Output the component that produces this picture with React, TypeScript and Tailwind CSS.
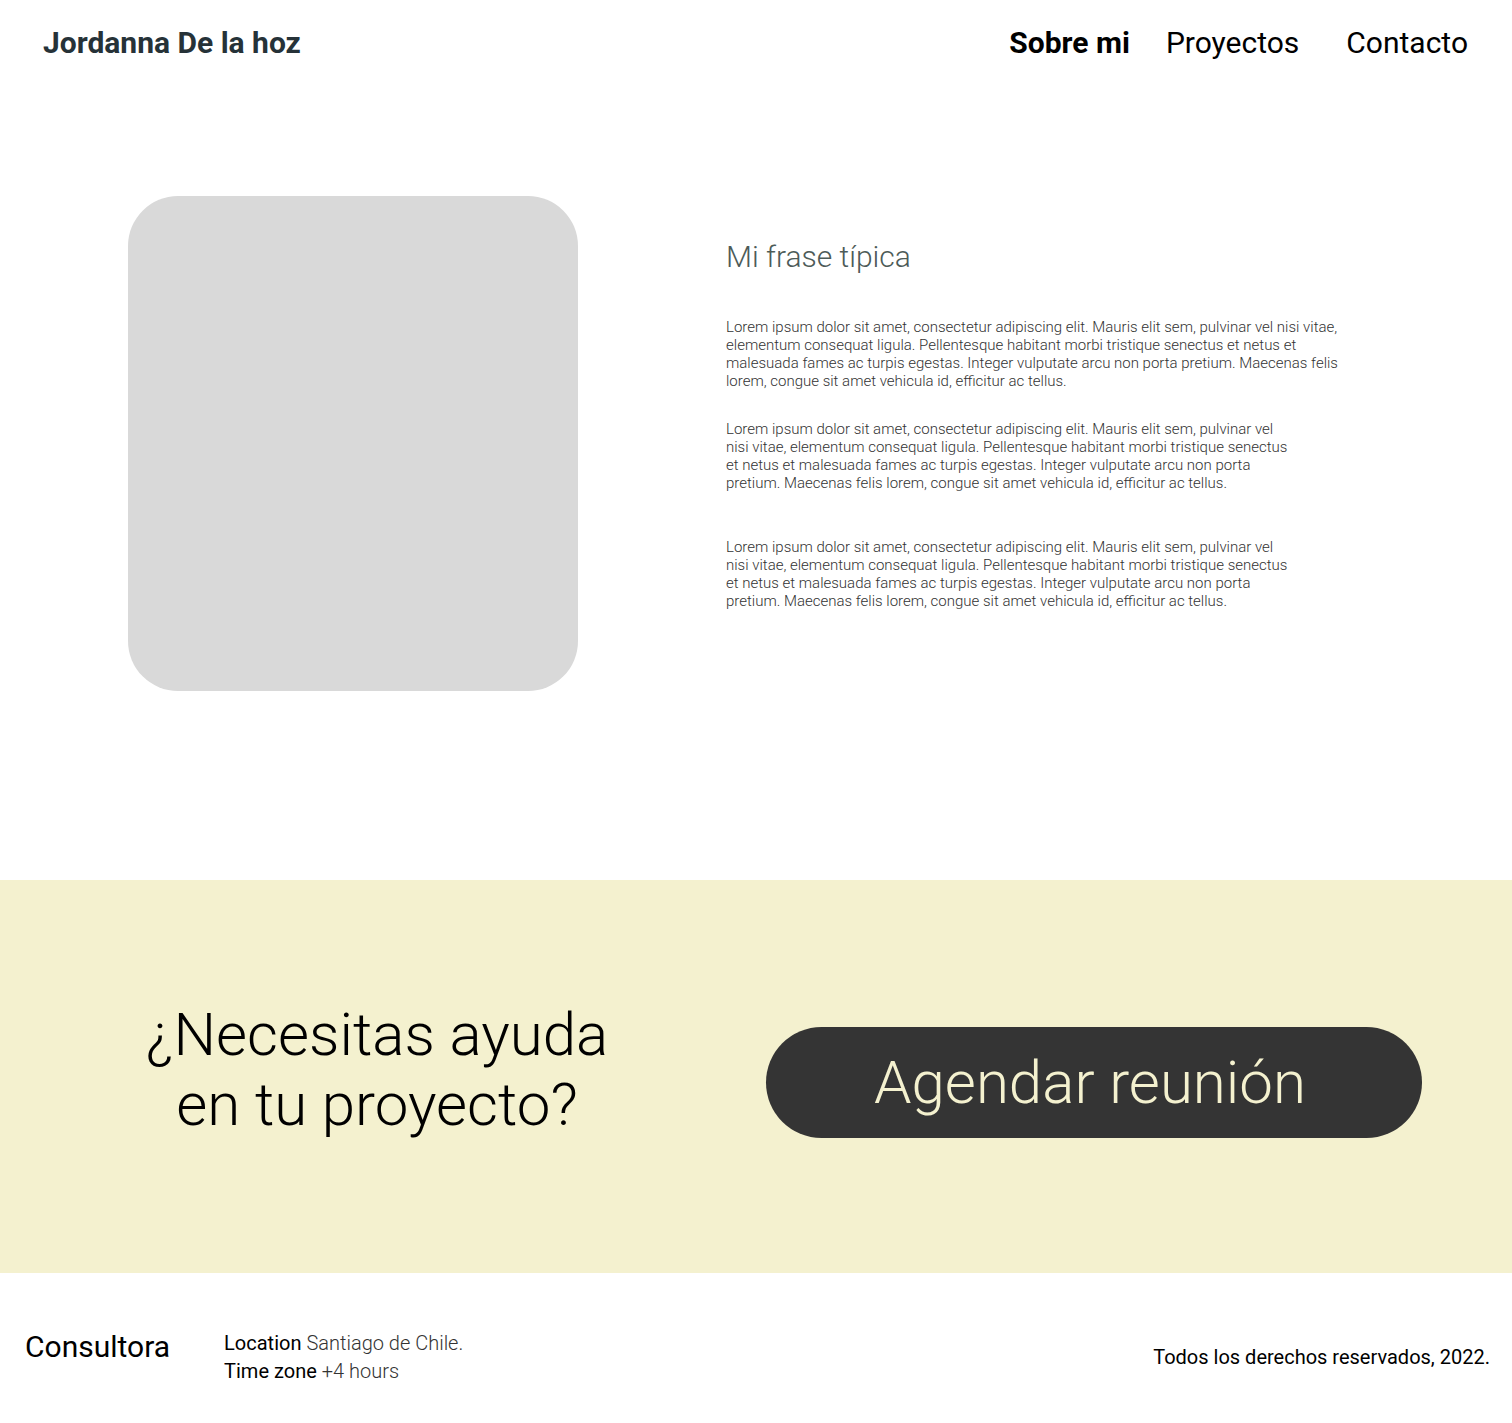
import React from "react";

const P =
  "Lorem ipsum dolor sit amet, consectetur adipiscing elit. Mauris elit sem, pulvinar vel nisi vitae, elementum consequat ligula. Pellentesque habitant morbi tristique senectus et netus et malesuada fames ac turpis egestas. Integer vulputate arcu non porta pretium. Maecenas felis lorem, congue sit amet vehicula id, efficitur ac tellus.";

export default function App() {
  return (
    <div className="w-[1512px] min-h-[1423px] bg-white font-['Roboto',_sans-serif] text-black">
      {/* Header */}
      <header className="h-[88px] flex items-center justify-between pl-[43px] pr-[44px] pb-[3px]">
        <div className="text-[30px] font-bold text-[#263238]">Jordanna De la hoz</div>
        <nav className="flex items-center text-[30px]">
          <a className="font-bold">Sobre mi</a>
          <a className="ml-[36px]">Proyectos</a>
          <a className="ml-[47px]">Contacto</a>
        </nav>
      </header>

      {/* About */}
      <section className="h-[792px] flex pl-[128px] pt-[108px]">
        <div className="w-[450px] h-[495px] rounded-[50px] bg-[#d9d9d9] shrink-0" />
        <div className="ml-[148px] pt-[43px] flex flex-col">
          <h2 className="text-[30px] leading-[36px] font-light text-[#4d5b58]">Mi frase típica</h2>
          <p className="mt-[43px] w-[625px] text-[15px] leading-[18px] font-light text-[#333333]">{P}</p>
          <p className="mt-[30px] w-[568px] text-[15px] leading-[18px] font-light text-[#333333]">{P}</p>
          <p className="mt-[46px] w-[568px] text-[15px] leading-[18px] font-light text-[#333333]">{P}</p>
        </div>
      </section>

      {/* CTA */}
      <section className="h-[393px] bg-[#f4f1cf] flex items-center">
        <h2 className="w-[754px] text-center text-[60px] leading-[70px] font-light text-black mt-[-14px]">
          ¿Necesitas ayuda
          <br />
          en tu proyecto?
        </h2>
        <button className="ml-[12px] mt-[12px] w-[656px] h-[111px] rounded-full bg-[#343434] text-[#f4f1cf] text-[60px] font-light flex items-center justify-center pr-[8px]">
          Agendar reunión
        </button>
      </section>

      {/* Footer */}
      <footer className="h-[150px] flex items-center justify-between pl-[25px] pr-[22px] pt-[18px]">
        <div className="flex items-center">
          <div className="text-[30px] leading-[36px] mt-[-20px]">Consultora</div>
          <div className="ml-[54px] text-[20px] leading-[28px]">
            <div>
              <span className="font-normal">Location</span>{" "}
              <span className="font-light text-[#333333]">Santiago de Chile.</span>
            </div>
            <div>
              <span className="font-normal">Time zone</span>{" "}
              <span className="font-light text-[#333333]">+4 hours</span>
            </div>
          </div>
        </div>
        <div className="text-[20px] leading-[28px]">Todos los derechos reservados, 2022.</div>
      </footer>
    </div>
  );
}
